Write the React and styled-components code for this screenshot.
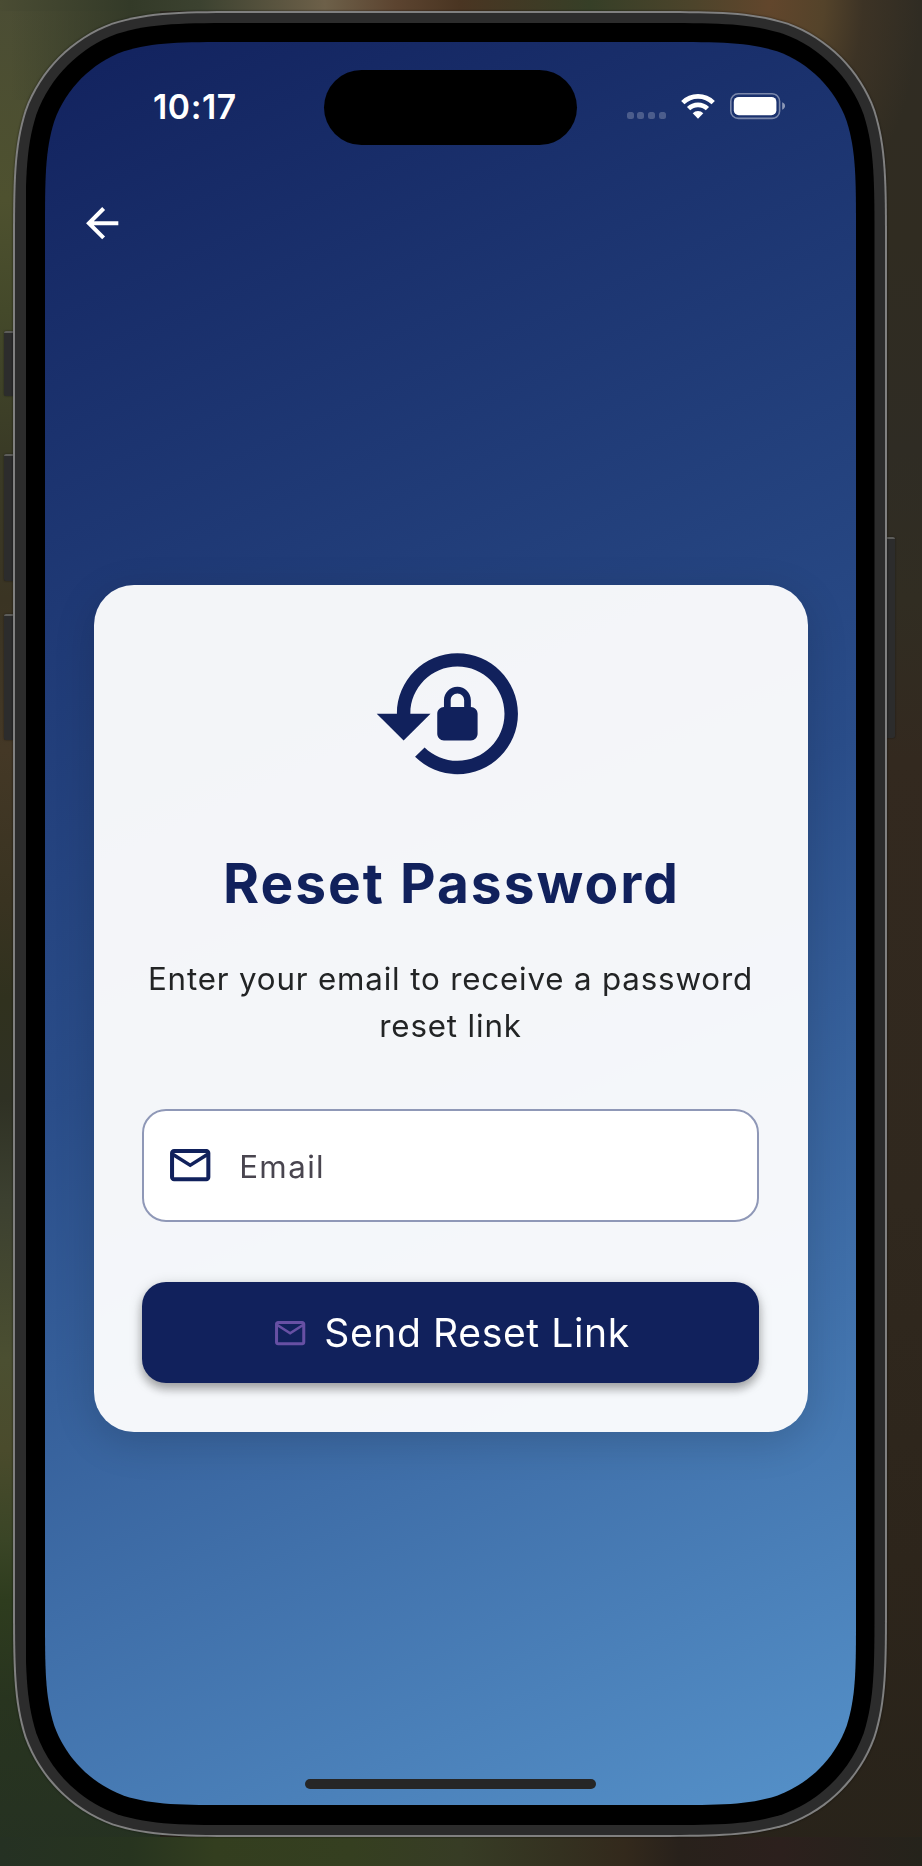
import React from "react";
import styled, { createGlobalStyle } from "styled-components";

const NAVY = "#11215c";

/* Continuous ("squircle") corner outline for a w x h box. */
const smooth = (w, h, r) => {
  const a = 1.528665 * r, b = 1.088493 * r, c = 0.868407 * r;
  const d = 0.631494 * r, e = 0.074911 * r, f = 0.372824 * r, g = 0.16906 * r;
  return `path("M${a} 0 L${w - a} 0 C${w - b} 0 ${w - c} 0 ${w - d} ${e} C${w - f} ${g} ${w - g} ${f} ${w - e} ${d} C${w} ${c} ${w} ${b} ${w} ${a} L${w} ${h - a} C${w} ${h - b} ${w} ${h - c} ${w - e} ${h - d} C${w - g} ${h - f} ${w - f} ${h - g} ${w - d} ${h - e} C${w - c} ${h} ${w - b} ${h} ${w - a} ${h} L${a} ${h} C${b} ${h} ${c} ${h} ${d} ${h - e} C${f} ${h - g} ${g} ${h - f} ${e} ${h - d} C0 ${h - c} 0 ${h - b} 0 ${h - a} L0 ${a} C0 ${b} 0 ${c} ${e} ${d} C${g} ${f} ${f} ${g} ${d} ${e} C${c} 0 ${b} 0 ${a} 0 Z")`;
};

const Global = createGlobalStyle`
  * { box-sizing: border-box; }
  body { margin: 0; background: #2b261d; font-family: Inter, "Liberation Sans", sans-serif; }
  button, input { font-family: inherit; }
`;

const Desktop = styled.main`
  display: grid;
  grid-template-columns: 13px 874px 35px;
  width: 922px;
  height: 1866px;
  padding-top: 11px;
  overflow: hidden;
  background:
    linear-gradient(90deg, #4a4c33 0, #333a28 130px, #3c4230 200px, #6d6049 325px, #5c4430 395px, #4a3522 460px, #363f27 590px, #4c442b 690px, #62462c 770px, rgba(84, 67, 42, 0) 771px) 0 0 / 100% 11px no-repeat,
    linear-gradient(90deg, #253123 0, #27341f 130px, #333e1f 215px, #353f20 350px, #373c25 461px, #343120 560px, #33291c 625px, #28211b 680px, #2c201d 780px, #25231b 922px) 0 100% / 100% 29px no-repeat,
    linear-gradient(90deg, rgba(54, 59, 42, 0) 10px, #343a28 130px) 0 0 / 160px 100px no-repeat,
    linear-gradient(180deg, #4b4d34 0, #4e512f 200px, #44492a 310px, #3a3b26 450px, #3a3423 600px, #443826 750px, #393321 900px, #30311e 1000px, #2f3124 1100px, #3c4030 1200px, #4b4f31 1360px, #4a4b2c 1450px, #3a4526 1540px, #2e3c1e 1600px, #28341f 1700px, #253122 1866px) 0 0 / 160px 100% no-repeat,
    radial-gradient(150px 240px at 770px 0, #62462c 0, #54432a 36%, rgba(66, 54, 38, 0.7) 62%, rgba(48, 44, 35, 0) 100%),
    linear-gradient(180deg, #302c23 0, #302c21 240px, #2f2c24 450px, #312d22 600px, #33291f 760px, #30281e 1200px, #2d251b 1560px, #28231a 1866px);
`;

const Rail = styled.div`
  display: flex;
  flex-direction: column;
  align-items: ${(p) => (p.$side === "left" ? "flex-end" : "flex-start")};
  padding-top: ${(p) => p.$top}px;
`;

const SideKey = styled.i`
  width: ${(p) => p.$w || 9}px;
  height: ${(p) => p.$h}px;
  margin-bottom: ${(p) => p.$gap || 0}px;
  border-top: 2px solid #5c5c59;
  border-radius: ${(p) => (p.$right ? "0 2px 2px 0" : "2px 0 0 2px")};
  background: #2c2c2c;
  box-shadow: 0 0 2px rgba(0, 0, 0, 0.5);
`;

const Shadowed = styled.div`
  filter: drop-shadow(0 0 1px rgba(0, 0, 0, 0.55));
`;

const Shell = styled.div`
  width: ${(p) => p.$w}px;
  height: ${(p) => p.$h}px;
  padding: ${(p) => p.$pad};
  background: ${(p) => p.$bg};
  clip-path: ${(p) => smooth(p.$w, p.$h, p.$r)};
`;

const Screen = styled.section`
  display: flex;
  flex-direction: column;
  align-items: center;
  width: 811px;
  height: 1763px;
  clip-path: ${smooth(811, 1763, 125)};
  background: linear-gradient(155.3deg, #12225e 0%, #2a4d89 50%, #5591c9 100%);
`;

const StatusBar = styled.header`
  display: grid;
  grid-template-columns: 279px 253px 279px;
  width: 100%;
  height: 103px;
  padding-top: 28px;
`;

const Clock = styled.time`
  padding: 0 0 0 108px;
  color: #fff;
  font-size: 33.7px;
  font-weight: 600;
  line-height: 73px;
  letter-spacing: 0.6px;
`;

const Island = styled.div`
  height: 75px;
  border-radius: 38px;
  background: #000;
`;

const Indicators = styled.div`
  display: flex;
  align-items: flex-start;
  padding: 23px 0 0 49px;
`;

const Signal = styled.div`
  display: flex;
  gap: 3.8px;
  margin: 19px 15px 0 0.7px;
`;

const SignalDot = styled.i`
  width: 7px;
  height: 7px;
  border-radius: 2.5px;
  background: rgba(255, 255, 255, 0.22);
`;

const Wifi = styled.svg`
  width: 34px;
  height: 26px;
  margin: 0 14.6px 0 0;
`;

const Battery = styled.svg`
  width: 56px;
  height: 28px;
`;

const BackButton = styled.button`
  align-self: flex-start;
  display: flex;
  margin: 54px 0 0 32.6px;
  padding: 0;
  border: 0;
  background: none;
  color: #fff;
`;

const Icon = styled.svg`
  display: block;
  flex: none;
  width: ${(p) => p.$size}px;
  height: ${(p) => p.$size}px;
  fill: currentColor;
`;

const Card = styled.form`
  display: flex;
  flex-direction: column;
  align-items: center;
  width: 714px;
  height: 847.2px;
  margin-top: 337.2px;
  padding: 48.4px;
  border-radius: 40px;
  background: rgba(255, 255, 255, 0.95);
  box-shadow: 0 10px 40px rgba(0, 0, 0, 0.15);
  color: ${NAVY};
`;

const Title = styled.h1`
  margin: 54.8px 0 38.2px;
  padding-left: 2px;
  font-size: 55px;
  font-weight: 700;
  line-height: 68px;
  letter-spacing: 2px;
  white-space: nowrap;
`;

const Hint = styled.p`
  margin: 0 -10px 59.6px;
  padding-top: 0.8px;
  color: #222425;
  font-size: 31.3px;
  line-height: 46.7px;
  letter-spacing: 0.83px;
  text-align: center;
  white-space: nowrap;
`;

const Field = styled.label`
  display: flex;
  align-items: center;
  width: 617.5px;
  height: 113px;
  padding-left: 22.5px;
  border: 2px solid #8f98b7;
  border-radius: 24px;
  background: #fff;
`;

const FieldLabel = styled.span`
  margin-left: 24.5px;
  padding-top: 2px;
  color: #49454f;
  font-size: 31.3px;
  line-height: 40px;
  letter-spacing: 1.4px;
`;

const SubmitButton = styled.button`
  display: flex;
  align-items: center;
  justify-content: flex-start;
  width: 617.5px;
  height: 101.3px;
  margin-top: 60px;
  padding: 0 0 0 129.9px;
  border: 0;
  border-radius: 24px;
  background: ${NAVY};
  box-shadow: 0 6px 10px rgba(0, 0, 0, 0.26), 0 3px 14px rgba(0, 0, 0, 0.18);
  color: #6750a4;
`;

const SubmitLabel = styled.span`
  margin-left: 16.3px;
  color: #fff;
  font-size: 39.1px;
  line-height: 48px;
  letter-spacing: 0.6px;
  white-space: nowrap;
`;

const HomeIndicator = styled.div`
  width: 291px;
  height: 10px;
  margin: auto 0 16.3px;
  border-radius: 5px;
  background: #262626;
`;

const MAIL =
  "M20 4H4c-1.1 0-1.99.9-1.99 2L2 18c0 1.1.9 2 2 2h16c1.1 0 2-.9 2-2V6c0-1.1-.9-2-2-2zm0 14H4V8l8 5 8-5v10zm-8-7L4 6h16l-8 5z";
const BACK = "M20 11H7.83l5.59-5.59L12 4l-8 8 8 8 1.41-1.41L7.83 13H20v-2z";
const LOCK_RESET =
  "M13 3c-4.97 0-9 4.03-9 9H1l4 4 4-4H6c0-3.86 3.14-7 7-7s7 3.14 7 7-3.14 7-7 7c-1.9 0-3.62-.76-4.88-1.99L6.7 18.42C8.32 20.01 10.55 21 13 21c4.97 0 9-4.03 9-9s-4.03-9-9-9zm2 8v-1c0-1.1-.9-2-2-2s-2 .9-2 2v1c-.55 0-1 .45-1 1v3c0 .55.45 1 1 1h4c.55 0 1-.45 1-1v-3c0-.55-.45-1-1-1zm-1 0h-2v-1c0-.55.45-1 1-1s1 .45 1 1v1z";

const Glyph = ({ d, size }) => (
  <Icon $size={size} viewBox="0 0 24 24" aria-hidden="true">
    <path d={d} />
  </Icon>
);

export default function App() {
  return (
    <>
      <Global />
      <Desktop>
        <Rail $side="left" $top={320}>
          <SideKey $h={65} $gap={58} />
          <SideKey $h={127} $gap={33} />
          <SideKey $h={126} />
        </Rail>
        <Shadowed>
          <Shell $w={874} $h={1826} $r={157} $bg="#808080" $pad="2px">
            <Shell $w={870} $h={1822} $r={155} $bg="#2c2c2c" $pad="10px 10.5px">
              <Shell $w={849} $h={1802} $r={145} $bg="#000" $pad="19px 18.5px 20px 19.5px">
                <Screen>
                  <StatusBar>
                    <Clock>10:17</Clock>
                    <Island />
                    <Indicators>
                      <Signal>
                        <SignalDot />
                        <SignalDot />
                        <SignalDot />
                        <SignalDot />
                      </Signal>
                      <Wifi viewBox="0 0 34 26">
                        <g fill="none" stroke="#fff" strokeWidth="4.7">
                          <path d="M1.8 9.6A21.6 21.6 0 0 1 32.2 9.6" />
                          <path d="M7.6 15.7A13.4 13.4 0 0 1 26.4 15.7" />
                        </g>
                        <path d="M11.7 20.2A7.5 7.5 0 0 1 22.3 20.2L17 25.7Z" fill="#fff" />
                      </Wifi>
                      <Battery viewBox="0 0 56 28">
                        <rect x="0.8" y="0.8" width="48.8" height="24.6" rx="7.5" fill="none" stroke="#fff" strokeOpacity="0.42" strokeWidth="1.6" />
                        <rect x="3.8" y="3.9" width="42.6" height="18.4" rx="5" fill="#fff" />
                        <path d="M52.2 9.3C56 10.6 56 15.2 52.2 16.7Z" fill="#fff" fillOpacity="0.5" />
                      </Battery>
                    </Indicators>
                  </StatusBar>
                  <BackButton type="button" aria-label="Back">
                    <Glyph d={BACK} size={48.4} />
                  </BackButton>
                  <Card>
                    <Glyph d={LOCK_RESET} size={161.4} />
                    <Title>Reset Password</Title>
                    <Hint>
                      Enter your email to receive a password
                      <br />
                      reset link
                    </Hint>
                    <Field>
                      <Glyph d={MAIL} size={48.4} />
                      <FieldLabel>Email</FieldLabel>
                    </Field>
                    <SubmitButton type="button">
                      <Glyph d={MAIL} size={36.3} />
                      <SubmitLabel>Send Reset Link</SubmitLabel>
                    </SubmitButton>
                  </Card>
                  <HomeIndicator />
                </Screen>
              </Shell>
            </Shell>
          </Shell>
        </Shadowed>
        <Rail $side="right" $top={526}>
          <SideKey $right $w={8} $h={201} />
        </Rail>
      </Desktop>
    </>
  );
}
